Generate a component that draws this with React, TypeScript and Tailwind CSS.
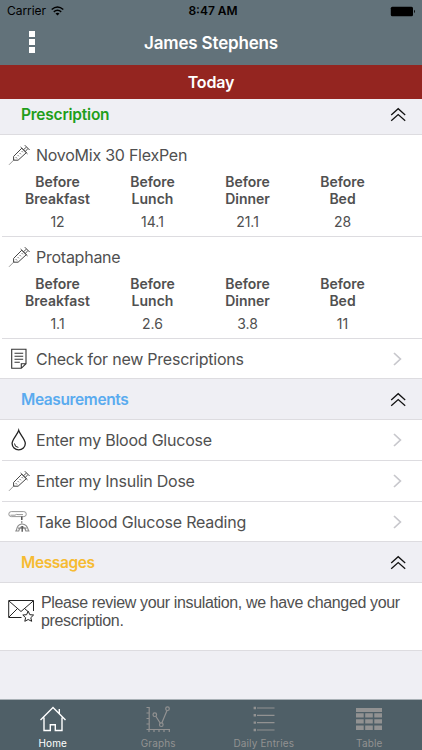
import React from 'react';

const Syringe = () => (
  <svg className="h-6 w-6" viewBox="0 0 24 24" fill="none" stroke="#444" strokeWidth="1">
    <path d="M1 21.8 6.2 16.6" stroke="#999" />
    <path d="M5.6 17.2 V13.4 L13.8 5.2 L18.3 9.7 L10.1 17.2 Z" />
    <path d="M12.6 4 L19.5 10.9 M15.6 6.8 L18.2 4.2 M17.2 8.4 L19.8 5.8 M16.8 2.2 L21.6 7" />
    <path d="M7.6 14 L9.1 15.5 M9.6 12 L10.9 13.3 M11.6 10 L12.9 11.3 M13.6 8 L14.9 9.3" stroke="#777" />
  </svg>
);

const Note = () => (
  <svg className="h-6 w-6" viewBox="0 0 24 24" fill="none" stroke="#333" strokeWidth="1.1">
    <path d="M3.7 2.2 H18 V16.7 L13.3 21.3 H3.7 Z M13.3 21.3 V16.7 H18" />
    <path d="M6.5 6.3 H15.2 M6.5 9.3 H15.2 M6.5 12.2 H15.2 M6.5 15.2 H11.8" />
  </svg>
);

const Drop = () => (
  <svg className="h-6 w-6" viewBox="0 0 24 24" fill="none" stroke="#222" strokeWidth="1.3">
    <path d="M10.7 2.4 C9.6 6.4 4.1 11.2 4.1 15.6 A6.6 6.2 0 0 0 17.3 15.6 C17.3 11.2 11.8 6.4 10.7 2.4 Z" />
    <path d="M6.5 15.5 A4.2 4 0 0 0 10.4 19.4" strokeWidth="1" />
  </svg>
);

const Reading = () => (
  <svg className="h-6 w-6" viewBox="0 0 24 24" fill="none" stroke="#8c8c8c" strokeWidth="0.9">
    <rect x="0.8" y="1.6" width="17.5" height="5" rx="2.5" />
    <path d="M2.5 5.2 H7 Q8.5 3.9 10 4.6 H15" />
    <path d="M13.8 6.6 V10" stroke="#444" strokeWidth="1.4" />
    <path d="M13.8 11 V13.5" stroke="#777" strokeWidth="1" />
    <path d="M8.3 20.5 C9 16.5 11.5 14 14 14 C16.8 14 19.6 16.5 20.5 20.5 M10.6 21.3 C11.4 18.2 12.5 16.8 14 16.8 C15.8 16.8 17.2 18.2 18 21.3 M7.2 21 H10.8 M18 21 H21.5 M10 18.2 H18.6" strokeWidth="1.2" />
    <path d="M14.2 16 V21.7" stroke="#555" strokeWidth="1.4" />
  </svg>
);

const Up = () => (
  <svg className="h-4 w-4" viewBox="0 0 16 16" fill="none" stroke="#111" strokeWidth="1.25">
    <path d="M1.2 8 L8.2 1.7 L15.2 8 M1.2 13.8 L8.2 7.5 L15.2 13.8" />
  </svg>
);

const Chevron = () => (
  <svg className="h-3.5 w-2.5" viewBox="0 0 10 14" fill="none" stroke="#c7c7cc" strokeWidth="1.7">
    <path d="M2 1 L8.4 7 L2 13" />
  </svg>
);

const SectionHeader = ({ title, tone }: { title: string; tone: string }) => (
  <div className={`flex items-center justify-between border-b border-[#dddce0] bg-[#efeff4] pt-0.5 pr-4 pl-[21px] ${tone}`}>
    <h2 className="text-[15.5px] font-semibold tracking-[-0.38px]">{title}</h2>
    <Up />
  </div>
);

const Row = ({ icon, label, last }: { icon: React.ReactNode; label: string; last?: boolean }) => (
  <div className={last ? 'border-b border-[#dddce0]' : 'pl-0.5'}>
    <div className={`flex items-center pr-5 ${last ? 'h-[39px] pl-2' : 'h-[41px] border-b border-[#dddce0] pl-1.5'}`}>
      {icon}
      <span className="ml-1 flex-1 whitespace-nowrap text-base tracking-[-0.23px] text-[#505050]">{label}</span>
      <Chevron />
    </div>
  </div>
);

const times = ['Breakfast', 'Lunch', 'Dinner', 'Bed'];

const Medication = ({ name, doses }: { name: string; doses: string[] }) => (
  <div className="pl-0.5">
    <div className="h-[102px] border-b border-[#dddce0] pt-2 text-[#505050]">
      <div className="flex h-6 items-center pl-1.5">
        <Syringe />
        <span className="ml-1 text-base tracking-[-0.25px]">{name}</span>
      </div>
      <div className="mr-[32px] ml-2 grid grid-cols-4 pt-1.5 text-center text-sm leading-[17px]">
        {times.map((t, i) => (
          <div key={t}>
            <div className="font-semibold">Before<br />{t}</div>
            <div className="mt-[6px]">{doses[i]}</div>
          </div>
        ))}
      </div>
    </div>
  </div>
);

const Home = () => (
  <svg className="h-7 w-7" viewBox="0 0 28 28" fill="none" stroke="#fff" strokeWidth="1.4">
    <path d="M1.5 15 L14 2.5 L26.5 15 M5 12.5 V25.5 H11.3 V19.8 H16.3 V25.5 H23 V12.5 M20.3 8.5 V4" />
  </svg>
);
const Graph = () => (
  <svg className="h-7 w-7" viewBox="0 0 28 28" fill="none" stroke="#929292" strokeWidth="1.2">
    <path d="M5.2 2 V24.5 H26 M2.5 2.5 H5 M2.5 8 H5 M2.5 13.5 H5 M2.5 19 H5 M2.5 24.5 H5 M5 24 V27 M10 24 V27 M15 24 V27 M20 24 V27 M25.3 24 V27" />
    <circle cx="10.8" cy="9.7" r="1.8" /><circle cx="17.3" cy="19.7" r="1.8" /><circle cx="23.5" cy="3.7" r="1.8" />
    <path d="M11.8 11.2 L16.3 18.2 M17.8 18 L23 5.4" />
  </svg>
);
const List = () => (
  <svg className="h-7 w-7" viewBox="0 0 28 28" fill="none" stroke="#929292" strokeWidth="1.2">
    <path d="M7 3 H24.5 M7 10.3 H24.5 M7 17.6 H24.5 M7 25 H24.5" />
    <path d="M3.6 3 H6 M3.6 10.3 H6 M3.6 17.6 H6 M3.6 25 H6" strokeWidth="2.4" />
  </svg>
);
const Table = () => (
  <svg className="h-7 w-7" viewBox="0 0 28 28" fill="#929292">
    <path d="M1 3h26v4H1zM1 8.3h7.7v4.2H1zM10.2 8.3h7.6v4.2h-7.6zM19.3 8.3H27v4.2h-7.7zM1 14.3h7.7v4.2H1zM10.2 14.3h7.6v4.2h-7.6zM19.3 14.3H27v4.2h-7.7zM1 20.6h7.7V25H1zM10.2 20.6h7.6V25h-7.6zM19.3 20.6H27V25h-7.7z" />
  </svg>
);

const tabs = [
  { label: 'Home', icon: <Home />, tone: 'text-white' },
  { label: 'Graphs', icon: <Graph />, tone: 'text-[#929292]' },
  { label: 'Daily Entries', icon: <List />, tone: 'text-[#929292]' },
  { label: 'Table', icon: <Table />, tone: 'text-[#929292]' },
];

export default function App() {
  return (
    <div className="flex h-[750px] w-[422px] flex-col overflow-hidden bg-[#efeff4] font-['Inter',sans-serif]">
      <header className="bg-[#62727a]">
        <div className="grid h-[22px] grid-cols-3 items-center px-[7px] text-xs text-black">
          <div className="flex items-center gap-[5px]">
            <span className="tracking-[-0.05px]">Carrier</span>
            <svg className="h-2.5 w-[13px]" viewBox="0 0 13 10" fill="none" stroke="#000" strokeWidth="1.5">
              <path d="M0.7 3.5 Q6.5 -1.6 12.3 3.5 M2.8 5.9 Q6.5 2.7 10.2 5.9" />
              <path d="M6.5 9.5 L4.5 7.4 Q6.5 5.9 8.5 7.4 Z" fill="#000" stroke="none" />
            </svg>
          </div>
          <span className="pl-1 text-center font-semibold">8:47 AM</span>
          <svg className="h-[11px] w-[25px] justify-self-end" viewBox="0 0 25 11">
            <rect x="0.8" y="0.7" width="22.2" height="9.6" rx="1.5" /><path d="M24 3.8 Q25.8 5.5 24 7.2 Z" />
          </svg>
        </div>
        <div className="grid h-[43px] grid-cols-[60px_1fr_60px] items-center">
          <div className="mb-[3px] ml-[29px] flex flex-col gap-0.5">
            <i className="h-1.5 w-1.5 bg-white" /><i className="h-1.5 w-1.5 bg-white" /><i className="h-1.5 w-1.5 bg-white" />
          </div>
          <h1 className="text-center text-[17px] font-semibold tracking-[-0.17px] text-white">James Stephens</h1>
        </div>
      </header>
      <div className="flex h-[34px] items-center justify-center bg-[#942520] text-base font-semibold tracking-[-0.15px] text-white">Today</div>
      <section>
        <div className="h-9 border-b border-[#dddce0]">
          <div className="flex h-[31px] items-center justify-between pr-4 pl-[21px]">
            <h2 className="text-[15.5px] font-semibold tracking-[-0.22px] text-[#1f9e1b]">Prescription</h2>
            <Up />
          </div>
        </div>
        <div className="bg-white">
          <Medication name="NovoMix 30 FlexPen" doses={['12', '14.1', '21.1', '28']} />
          <Medication name="Protaphane" doses={['1.1', '2.6', '3.8', '11']} />
          <Row icon={<Note />} label="Check for new Prescriptions" last />
        </div>
      </section>
      <section>
        <div className="grid h-[41px]"><SectionHeader title="Measurements" tone="text-[#5aabef]" /></div>
        <div className="bg-white">
          <Row icon={<Drop />} label="Enter my Blood Glucose" />
          <Row icon={<Syringe />} label="Enter my Insulin Dose" />
          <Row icon={<Reading />} label="Take Blood Glucose Reading" last />
        </div>
      </section>
      <section>
        <div className="grid h-[41px]"><SectionHeader title="Messages" tone="text-[#f6bb32]" /></div>
        <div className="flex h-[68px] border-b border-[#dddce0] bg-white pl-2">
          <svg className="mt-4 h-6 w-7 shrink-0" viewBox="0 0 28 24" fill="none" stroke="#222" strokeWidth="1">
            <path d="M13.5 18.5 H0.7 V1.5 H25.5 V12 M1 2 L13 12.5 L25.2 2 M1 18 L9.5 9.5 M16.5 9.5 L20 12.5" />
            <path d="M20.2 12.2 L21.8 15.7 L25.6 16 L22.8 18.7 L23.7 22.3 L20.2 20.5 L16.8 22.3 L17.6 18.7 L14.8 16 L18.6 15.7 Z" />
          </svg>
          <p className="ml-[5px] pt-[11px] font-['Liberation_Sans',sans-serif] text-base leading-[18px] tracking-[-0.36px] whitespace-nowrap text-[#505050]">Please review your insulation, we have changed your<br />prescription.</p>
        </div>
      </section>
      <nav className="mt-auto grid h-[51px] grid-cols-4 border-t border-[#a9b1b6] bg-[#4f5f67]">
        {tabs.map((t) => (
          <div key={t.label} className={`flex flex-col items-center gap-px pt-[5px] text-[10px] leading-[18px] ${t.tone}`}>
            {t.icon}
            <span className="tracking-[0.15px] whitespace-nowrap">{t.label}</span>
          </div>
        ))}
      </nav>
    </div>
  );
}
